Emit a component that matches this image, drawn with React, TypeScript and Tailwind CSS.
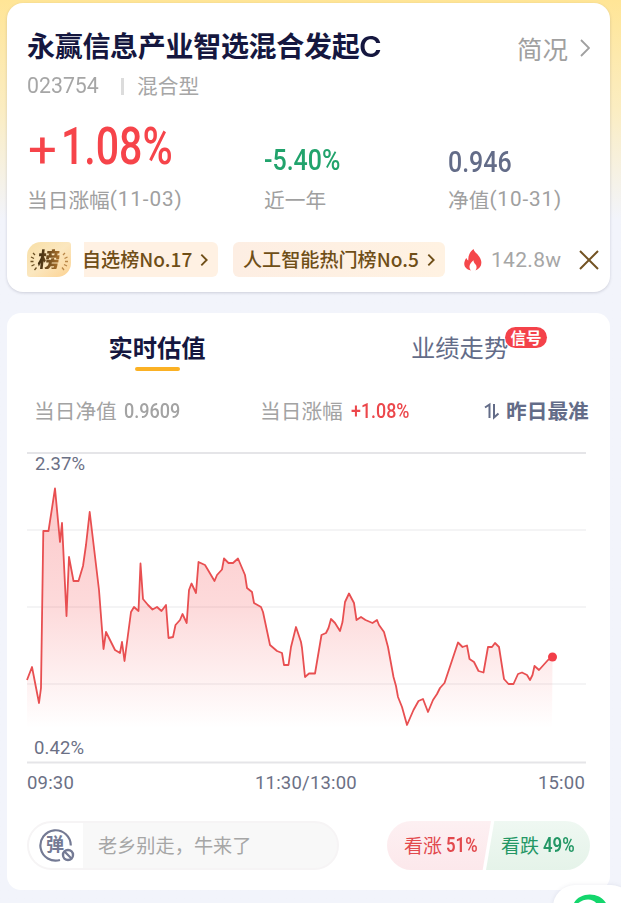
import type { ReactNode } from "react";
import { clsx } from "clsx";

const POINTS: [number, number][] = [
  [27, 680], [32, 667], [39, 703], [41, 688], [43.3, 531], [48.5, 531], [55, 488.5], [60, 542], [62, 523],
  [66.5, 616], [69, 557], [73.5, 581], [78.5, 581], [83, 566], [86, 545], [89.7, 512], [99, 590], [103.5, 649],
  [106, 632], [115, 650], [120, 653], [122, 642], [124.5, 661], [131, 612], [134, 607], [138.5, 611],
  [140.5, 563.5], [143, 599], [148, 605], [152.5, 609.5], [157, 607], [161.5, 611], [166, 605], [168.5, 638],
  [173, 637], [175.5, 625], [180, 620], [182.5, 614], [186.7, 623], [189, 590], [191.5, 583.5], [196, 593],
  [198.5, 562], [205, 565], [208, 570], [214.5, 581], [217, 575], [222, 569.5], [224, 558.5], [228.5, 563],
  [233, 563], [238, 558.5], [245, 575], [247, 588], [252, 592], [254, 603], [261, 607], [263, 612], [270, 645],
  [277, 651], [282, 653], [284, 665], [288.5, 665], [291, 647], [296, 627], [301, 642], [302, 648], [305, 677],
  [309, 673.5], [315, 673.5], [321.5, 635], [326, 633], [328.5, 628], [331, 619], [335, 623], [340, 631],
  [342.5, 622], [345, 602], [349, 593.5], [354, 603], [356.5, 620], [361, 617], [365.5, 620], [372.5, 623],
  [377, 620], [379, 625], [384, 632], [388, 647], [393.5, 677], [396, 686], [398, 697], [402, 707], [407, 725],
  [413.5, 710], [418.5, 701], [423, 699], [428, 712], [433, 700], [437, 694], [440, 688], [444.5, 683],
  [458, 642.5], [462.5, 647], [467, 645.5], [469.5, 659], [474, 662], [478.5, 671], [483.5, 672.5], [488, 647],
  [492, 647], [495, 643], [499, 647], [504, 679], [508.5, 684], [513.5, 684], [518, 674], [522, 672.5],
  [527, 675], [530, 680], [532.5, 675], [534.5, 666], [539, 670], [548, 660], [552.5, 657],
];

const LINE = POINTS.map(([x, y]) => `${x},${y}`).join(" ");

// condensed digits
function Num({ className, children }: { className?: string; children: ReactNode }) {
  return (
    <span className={clsx("inline-block origin-left whitespace-nowrap font-[Roboto,sans-serif]", className)}>
      {children}
    </span>
  );
}

function Chevron({ className }: { className?: string }) {
  return (
    <svg viewBox="0 0 10 18" className={className} fill="none" stroke="currentColor">
      <path d="M1 1l8 8-8 8" />
    </svg>
  );
}

function RankBadge() {
  return (
    <div className="relative flex h-[35px] w-11 shrink-0 items-center justify-center rounded-tl-[14px] rounded-tr-[3px] rounded-br-[14px] rounded-bl-[3px] bg-linear-to-br from-[#f8dfa6] via-[#fbe7bf] to-[#fcd291]">
      <svg viewBox="0 0 44 35" className="absolute inset-0 h-full w-full" fill="none" stroke="#6b5023" strokeWidth="1.3">
        <path d="M6 11l2 2M4 15l3 1.500M3.500 19.500h3M4.500 24l3-1.500M7.500 28l2-2.500" />
        <path d="M38 11l-2 2M40.500 15l-3 1.500M41 19.500h-3M40 24l-3-1.500M37 28l-2-2.500" stroke="#b98648" />
      </svg>
      <span className="relative -top-[2px] -skew-x-6 bg-linear-to-r from-[#3c2b10] to-[#b0752d] bg-clip-text text-[22px] leading-none font-black text-transparent">
        榜
      </span>
    </div>
  );
}

function Summary() {
  return (
    <section className="mx-[7px] h-[289px] w-[603px] rounded-[16px] bg-white px-[20px] pt-[21px] shadow-[0_1px_3px_rgba(60,60,90,0.2)]">
      <div className="flex h-[44px] items-center justify-between">
        <h1 className="text-[28px] font-bold tracking-[-0.3px] whitespace-nowrap text-[#15173f]">
          永赢信息产业智选混合发起
          <span className="inline-block origin-left scale-x-[1.1] font-[Inter,sans-serif] text-[28px] font-semibold">C</span>
        </h1>
        <div className="flex items-center gap-[12px] pt-[4px] text-[25.5px] text-[#a0a0a0]">
          简况
          <Chevron className="h-[18px] w-[10px] stroke-[1.8]" />
        </div>
      </div>

      <div className="mt-[1px] flex h-[34px] items-center text-[20.700px] text-[#a6a6a6]">
        <Num className="w-[94px] scale-x-[0.99] text-[21.5px]">023754</Num>
        <span className="h-[17px] w-[3px] bg-[#dcdcdc]" />
        <span className="ml-[13px]">混合型</span>
      </div>

      <div className="mt-[9px] grid grid-cols-[236px_184px_1fr] pl-[1px]">
        <div className="flex h-[66px] items-center pt-[4px] text-[#f6444a]">
          <Num className="w-[33px] scale-x-[1.02] pt-[7px] text-[50px]">+</Num>
          <Num className="scale-x-[0.79] text-[52px] font-medium">1.08%</Num>
        </div>
        <div className="flex h-[66px] items-center pt-[31px]">
          <Num className="scale-x-[0.86] text-[29px] font-medium text-[#21a36c]">-5.40%</Num>
        </div>
        <div className="flex h-[66px] items-center pt-[36px]">
          <Num className="scale-x-[0.86] text-[29px] font-medium text-[#636c88]">0.946</Num>
        </div>
        <div className="-ml-[1px] flex h-[44px] items-center text-[20.700px] text-[#a0a0a0]">
          当日涨幅<Num className="tracking-[0.900px]">(11-03)</Num>
        </div>
        <div className="flex h-[44px] items-center text-[20.700px] text-[#a0a0a0]">近一年</div>
        <div className="flex h-[44px] items-center text-[20.700px] text-[#a0a0a0]">
          净值<Num className="tracking-[0.900px]">(10-31)</Num>
        </div>
      </div>

      <div className="mt-[20px] flex h-[35px] items-center text-[19.100px] font-medium whitespace-nowrap text-[#6f4e17]">
        <RankBadge />
        <div className="ml-[13px] flex h-[35px] w-[134px] shrink-0 items-center rounded-r-[6px] bg-[#fff1e3]">
          <span className="-ml-[2px] w-[118px]">自选榜No.17</span>
          <Chevron className="h-[12px] w-[8px] stroke-[2.800]" />
        </div>
        <div className="ml-[15px] flex h-[35px] w-[212px] shrink-0 items-center rounded-[6px] bg-linear-to-r from-[#fdeee3] to-[#fff2e2] pl-[10px]">
          <span className="w-[184px]">人工智能热门榜No.5</span>
          <Chevron className="h-[12px] w-[8px] stroke-[2.800]" />
        </div>
        <svg viewBox="0 0 18 22" className="ml-[19px] h-[22px] w-[18px] shrink-0" fill="#f5474b">
          <path d="M9.500 0c.4 3 4 4.500 6 8 3.500 5.500 2 11-4 13.500 1.500-2.500 1.500-4.500-.3-6.500-1-1.200-1.700-2-1.700-3.800-1.700 1.500-4 3.800-4 6.300 0 1.700.5 3 1.500 4C1 20-.8 16 .8 12c.4-1.300 1-2.500 1.700-3 .3 1.300.8 2 1.800 2.500C4 6.500 6 2.500 9.500 0z" />
        </svg>
        <Num className="ml-[9px] w-[88px] shrink-0 pt-[2px] text-[21px] font-normal tracking-[0.300px] text-[#a6a6a6]">142.8w</Num>
        <svg viewBox="0 0 20 20" className="h-[20px] w-[20px] shrink-0" fill="none" stroke="#735323" strokeWidth="2">
          <path d="M1 1l18 18M19 1L1 19" />
        </svg>
      </div>
    </section>
  );
}

function Chart() {
  return (
    <div className="relative mt-[18px] text-[#6b7085]">
      <svg viewBox="20 450 566 316" className="-ml-[7px] block h-[316px] w-[566px]" fill="none">
        <defs>
          <linearGradient id="area" gradientUnits="userSpaceOnUse" x1="0" y1="488" x2="0" y2="728">
            <stop offset="0" stopColor="#f5484c" stopOpacity="0.3" />
            <stop offset="0.5" stopColor="#f5484c" stopOpacity="0.2" />
            <stop offset="1" stopColor="#f5484c" stopOpacity="0" />
          </linearGradient>
        </defs>
        <path d="M27 530h559M27 607h559M27 684h559" stroke="#f1f1f2" strokeWidth="1.5" />
        <path d="M27 453h559M27 762.500h559" stroke="#e5e5e8" strokeWidth="1.8" />
        <polygon points={`27,728 ${LINE} 552,728`} fill="url(#area)" />
        <polyline points={LINE} stroke="#e84f51" strokeWidth="1.8" strokeLinejoin="round" />
        <circle cx="552.5" cy="657" r="4.500" fill="#f23e48" />
      </svg>
      <Num className="absolute top-[3px] left-[8px] text-[18.500px] leading-[22px] tracking-[0.100px]">2.37%</Num>
      <Num className="absolute top-[287px] left-[7px] text-[18.500px] leading-[22px] tracking-[0.100px]">0.42%</Num>
      <div className="flex h-[36px] w-[558px] items-center justify-between text-[18.500px] tracking-[0.200px]">
        <Num>09:30</Num>
        <Num>11:30/13:00</Num>
        <Num>15:00</Num>
      </div>
    </div>
  );
}

function MuteDanmaku() {
  return (
    <div className="relative h-[36px] w-[36px] text-[#747a94]">
      <svg viewBox="0 0 36 36" className="absolute inset-0" fill="none" stroke="currentColor" strokeWidth="2.200">
        <path d="M31.800 17.500A15.200 15.200 0 1 0 21 32" />
        <circle cx="29" cy="27" r="5" strokeWidth="2.400" />
        <path d="M25.500 23.500l7 7" strokeWidth="2.200" />
      </svg>
      <span className="absolute top-[5px] left-[7px] text-[18px] leading-[20px] font-bold">弹</span>
    </div>
  );
}

function Estimate() {
  return (
    <section className="mx-[7px] mt-[21px] h-[577px] w-[603px] rounded-[14px] bg-white px-[20px] pt-[14px]">
      <div className="flex h-[45px] text-[24.300px] leading-[40px]">
        <div className="ml-[81px] w-[98px] text-center font-bold whitespace-nowrap text-[#15173f]">
          实时估值
          <div className="mx-auto h-[4px] w-[45px] rounded-full bg-[#fbb124]" />
        </div>
        <div className="relative ml-[205px] whitespace-nowrap text-[#636c88]">
          业绩走势
          <span className="absolute top-0 left-[94px] h-[21px] w-[42px] rounded-full bg-[#f4424a] text-center text-[15.500px] leading-[21px] font-bold text-white">
            信号
          </span>
        </div>
      </div>

      <div className="mt-[18px] flex h-[42px] items-center text-[20.700px] whitespace-nowrap text-[#a3a3a3]">
        <div className="ml-[7px] flex w-[226px] items-center">
          当日净值<Num className="ml-[7px] scale-x-[0.88] text-[20.500px] font-medium">0.9609</Num>
        </div>
        <div className="flex w-[224px] items-center">
          当日涨幅<Num className="ml-[8px] scale-x-[0.85] pt-[1px] text-[21px] font-medium text-[#ec474b]">+1.08%</Num>
        </div>
        <div className="flex items-center gap-[6px] font-bold text-[#636c88]">
          <svg viewBox="0 0 16 18" className="h-[18px] w-[16px]" fill="none" stroke="currentColor" strokeWidth="2">
            <path d="M1 5.500l4.500-3V16M10 2v13.500l4.500-4" />
          </svg>
          昨日最准
        </div>
      </div>

      <Chart />

      <div className="mt-[19px] flex h-[49px] items-center">
        <div className="flex h-[49px] w-[312px] items-center overflow-hidden rounded-full border-2 border-[#f6f4f5] bg-[#f8f8f8] text-[19.200px] text-[#a6a6a6]">
          <div className="flex h-[45px] w-[54px] items-center bg-white pl-[10px]">
            <MuteDanmaku />
          </div>
          <span className="ml-[15px]">老乡别走，牛来了</span>
        </div>
        <div className="ml-[48px] flex h-[49px] w-[104px] items-center rounded-l-full bg-linear-to-b from-[#fdf0f2] to-[#fce8eb] pl-[17px] text-[19px] whitespace-nowrap text-[#e2494d] [clip-path:polygon(0_0,100%_0,92%_100%,0_100%)]">
          看涨<Num className="ml-[4px] scale-x-[0.8] text-[21px] font-semibold">51%</Num>
        </div>
        <div className="-ml-[5px] flex h-[49px] w-[104px] items-center rounded-r-full bg-linear-to-b from-[#eff8f2] to-[#e5f3e9] pl-[15px] text-[19px] whitespace-nowrap text-[#239765] [clip-path:polygon(8%_0,100%_0,100%_100%,0_100%)]">
          看跌<Num className="ml-[4px] scale-x-[0.8] text-[21px] font-semibold">49%</Num>
        </div>
      </div>
    </section>
  );
}

export default function App() {
  return (
    <main className="relative h-[903px] w-[621px] overflow-hidden bg-[#f2f4fb] bg-linear-to-b from-[#ffe596] via-[#fbedc2] via-[110px] to-[#f2f4fb] to-[220px] pt-[3px] font-['Noto_Sans_CJK_SC',sans-serif]">
      <Summary />
      <Estimate />

      {/* floating share button */}
      <div className="absolute top-[885px] left-[553px] h-[70px] w-[80px] rounded-[22px] bg-white shadow-[0_0_4px_rgba(80,90,120,0.12)]">
        <svg viewBox="0 0 80 70" className="h-[70px] w-[80px]">
          <path d="M20.500 19C26 6.500 47 6 53.500 19H44C40 13.500 32 12.500 24 19z" fill="#13d66c" />
        </svg>
      </div>
    </main>
  );
}
